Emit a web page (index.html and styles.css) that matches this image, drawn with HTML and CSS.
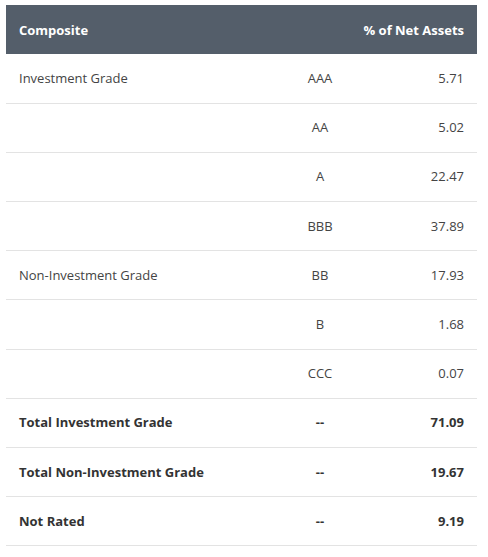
FILE: index.html
```html
<!DOCTYPE html>
<html lang="en">
<head>
    <meta charset="UTF-8">
    <meta name="viewport" content="width=device-width, initial-scale=1.0">
    <title>Credit Quality</title>
    <link rel="stylesheet" href="styles.css">
</head>
<body>
    <table class="quality">
        <colgroup>
            <col class="col-name">
            <col class="col-rating">
            <col class="col-value">
        </colgroup>
        <thead>
            <tr>
                <th>Composite</th>
                <th class="right" colspan="2">% of Net Assets</th>
            </tr>
        </thead>
        <tbody>
            <tr><td>Investment Grade</td><td class="center">AAA</td><td class="right">5.71</td></tr>
            <tr><td></td><td class="center">AA</td><td class="right">5.02</td></tr>
            <tr><td></td><td class="center">A</td><td class="right">22.47</td></tr>
            <tr><td></td><td class="center">BBB</td><td class="right">37.89</td></tr>
            <tr><td>Non-Investment Grade</td><td class="center">BB</td><td class="right">17.93</td></tr>
            <tr><td></td><td class="center">B</td><td class="right">1.68</td></tr>
            <tr><td></td><td class="center">CCC</td><td class="right">0.07</td></tr>
            <tr class="total"><td>Total Investment Grade</td><td class="center">--</td><td class="right">71.09</td></tr>
            <tr class="total"><td>Total Non-Investment Grade</td><td class="center">--</td><td class="right">19.67</td></tr>
            <tr class="total"><td>Not Rated</td><td class="center">--</td><td class="right">9.19</td></tr>
        </tbody>
    </table>
</body>
</html>
```

FILE: styles.css
```css
*{
    box-sizing: border-box;
    margin: 0;
    padding: 0;
}
body{
    background: #fff;
    padding: 5px 0 0 6px;
    font-family: "Open Sans", "Liberation Sans", sans-serif;
    font-size: 13px;
    color: #444;
}
.quality{
    width: 471px;
    border-collapse: collapse;
    table-layout: fixed;
}
.col-name{
    width: 254px;
}
.col-rating{
    width: 120px;
}
.quality th{
    background: #545e6a;
    color: #fff;
    font-weight: 700;
    text-align: left;
    white-space: nowrap;
    height: 49px;
    padding: 0 13px;
}
.quality td{
    height: 49.2px;
    padding: 0 13px 1px;
    border-bottom: 1px solid #e3e3e3;
    vertical-align: middle;
    white-space: nowrap;
}
.quality .center{
    text-align: center;
}
.quality .right{
    text-align: right;
}
.quality tr.total td{
    font-weight: 700;
    color: #333;
}
```
